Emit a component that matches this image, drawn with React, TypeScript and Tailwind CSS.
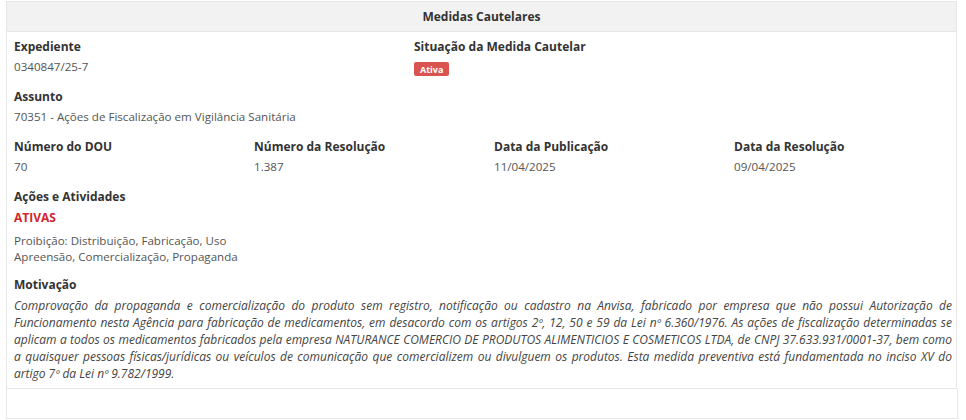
import React from "react";

const font = { fontFamily: '"Open Sans", "Noto Sans", sans-serif' };

function Field({
  label,
  children,
}: {
  label: string;
  children: React.ReactNode;
}) {
  return (
    <div className="mb-[10px]">
      <div className="text-[12px] leading-5 font-bold text-[#333]">{label}</div>
      <div className="text-[11.6px] leading-5 text-[#555]">{children}</div>
    </div>
  );
}

export default function App() {
  return (
    <div className="w-[966px] h-[420px] bg-white overflow-hidden" style={font}>
      <div className="ml-[6px] mt-[1px] w-[951px] border border-[#e6e6e6]">
        <div className="h-[30px] bg-[#f2f2f2] border-b border-[#e6e6e6] flex items-center justify-center">
          <h1 className="text-[12px] font-bold text-[#333]">Medidas Cautelares</h1>
        </div>

        <div className="pl-[7px] pr-[4px] pt-[5px] pb-[6px]">
          <div className="grid grid-cols-[400px_1fr]">
            <Field label="Expediente">0340847/25-7</Field>
            <div className="mb-[10px]">
              <div className="text-[12px] leading-5 font-bold text-[#333]">
                Situação da Medida Cautelar
              </div>
              <div className="h-5 pt-[5px] flex items-start">
                <span className="flex items-center h-[14px] px-[6px] rounded-[2px] bg-[#d9534f] text-white text-[9px] font-bold leading-none">
                  Ativa
                </span>
              </div>
            </div>
          </div>

          <Field label="Assunto">70351 - Ações de Fiscalização em Vigilância Sanitária</Field>

          <div className="grid grid-cols-[240px_240px_240px_1fr]">
            <Field label="Número do DOU">70</Field>
            <Field label="Número da Resolução">1.387</Field>
            <Field label="Data da Publicação">11/04/2025</Field>
            <Field label="Data da Resolução">09/04/2025</Field>
          </div>

          <div className="mb-[10px]">
            <div className="text-[12px] leading-5 font-bold text-[#333]">Ações e Atividades</div>
            <div className="text-[12px] leading-[22px] font-bold text-[#d0262b]">ATIVAS</div>
            <div className="mt-[4px] text-[11.6px] leading-[16px] text-[#555]">
              <div>Proibição: Distribuição, Fabricação, Uso</div>
              <div>Apreensão, Comercialização, Propaganda</div>
            </div>
          </div>

          <div>
            <div className="text-[12px] leading-5 font-bold text-[#333]">Motivação</div>
            <p className="mt-[1.5px] text-[12px] leading-[17px] italic text-[#444] text-justify">
              Comprovação da propaganda e comercialização do produto sem registro, notificação ou
              cadastro na Anvisa, fabricado por empresa que não possui Autorização de Funcionamento
              nesta Agência para fabricação de medicamentos, em desacordo com os artigos 2º, 12, 50 e
              59 da Lei nº 6.360/1976. As ações de fiscalização determinadas se aplicam a todos os
              medicamentos fabricados pela empresa NATURANCE COMERCIO DE PRODUTOS ALIMENTICIOS E
              COSMETICOS LTDA, de CNPJ 37.633.931/0001-37, bem como a quaisquer pessoas
              físicas/jurídicas ou veículos de comunicação que comercializem ou divulguem os produtos.
              Esta medida preventiva está fundamentada no inciso XV do artigo 7º da Lei nº 9.782/1999.
            </p>
          </div>
        </div>
      </div>

      <div className="ml-[6px] w-[952px] h-[30px] border border-t-0 border-[#e6e6e6] bg-white" />
    </div>
  );
}
